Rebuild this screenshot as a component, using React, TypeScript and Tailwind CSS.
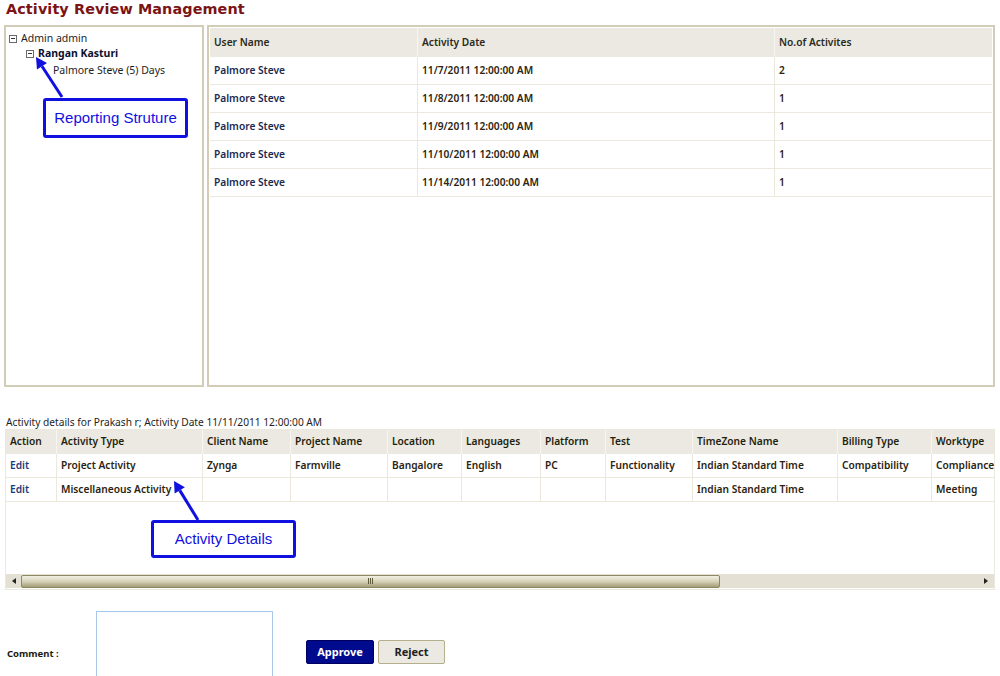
import React from "react";

const font = { fontFamily: '"Noto Sans", "Liberation Sans", sans-serif' };

function TreeToggle() {
  return (
    <span className="inline-flex items-center justify-center w-[8px] h-[8px] border border-[#6b6b6b] bg-white mr-[4px] align-middle">
      <span className="block w-[4px] h-[1px] bg-[#333]" />
    </span>
  );
}

const topRows = [
  ["Palmore Steve", "11/7/2011 12:00:00 AM", "2"],
  ["Palmore Steve", "11/8/2011 12:00:00 AM", "1"],
  ["Palmore Steve", "11/9/2011 12:00:00 AM", "1"],
  ["Palmore Steve", "11/10/2011 12:00:00 AM", "1"],
  ["Palmore Steve", "11/14/2011 12:00:00 AM", "1"],
];

const detailCols: [string, number][] = [
  ["Action", 50],
  ["Activity Type", 146],
  ["Client Name", 88],
  ["Project Name", 97],
  ["Location", 74],
  ["Languages", 79],
  ["Platform", 65],
  ["Test", 87],
  ["TimeZone Name", 145],
  ["Billing Type", 94],
  ["Worktype", 80],
];

const detailRows = [
  ["Edit", "Project Activity", "Zynga", "Farmville", "Bangalore", "English", "PC", "Functionality", "Indian Standard Time", "Compatibility", "Compliance Test"],
  ["Edit", "Miscellaneous Activity", "", "", "", "", "", "", "Indian Standard Time", "", "Meeting"],
];

function Arrow({ x1, y1, x2, y2 }: { x1: number; y1: number; x2: number; y2: number }) {
  const ang = Math.atan2(y2 - y1, x2 - x1);
  const L = 11;
  const W = 6;
  const bx = x2 - L * Math.cos(ang);
  const by = y2 - L * Math.sin(ang);
  const px = -Math.sin(ang) * W;
  const py = Math.cos(ang) * W;
  return (
    <>
      <line x1={x1} y1={y1} x2={bx} y2={by} stroke="#1010e0" strokeWidth={3} />
      <polygon points={`${x2},${y2} ${bx + px},${by + py} ${bx - px},${by - py}`} fill="#1010e0" />
    </>
  );
}

export default function App() {
  return (
    <div className="relative w-[1000px] h-[676px] overflow-hidden bg-white text-[10.2px] text-[#1e1e1e]" style={font}>
      <h1
        className="pl-[6px] h-[22px] leading-[18px] text-[14.4px] font-bold text-[#7b1414] tracking-[0.1px]"
        style={{ fontFamily: '"DejaVu Sans", sans-serif' }}
      >
        Activity Review Management
      </h1>

      <div className="flex gap-[3px] pl-[4px] mt-[3px]">
        <div className="w-[200px] h-[362px] border-2 border-[#d3cdb8] pt-[4px] pl-[3px] text-[10.5px]">
          <div className="flex items-center h-[15px]">
            <TreeToggle />
            <span>Admin admin</span>
          </div>
          <div className="flex items-center h-[15px] pl-[17px]">
            <TreeToggle />
            <span className="font-bold text-[#0c1030]">Rangan Kasturi</span>
          </div>
          <div className="flex items-center h-[19px] pl-[44px]">Palmore Steve (5) Days</div>
        </div>

        <div className="w-[788px] h-[362px] border-2 border-[#d3cdb8] p-[1px]">
          <div className="grid grid-cols-[207px_357px_1fr] font-semibold">
            {["User Name", "Activity Date", "No.of Activites"].map((h, i) => (
              <div key={h} className={`h-[29px] flex items-center pl-[4px] bg-[#ebe9e1] text-[#2a2a1a] ${i > 0 ? "border-l border-[#f7f6f1]" : ""}`}>
                {h}
              </div>
            ))}
            {topRows.map((r, ri) =>
              r.map((c, ci) => (
                <div
                  key={`${ri}-${ci}`}
                  className={`h-[28px] flex items-center pl-[4px] border-b border-[#ece8dc] ${ci > 0 ? "border-l" : ""} ${ci === 0 ? "text-[#1a2a52]" : "text-[#2b2410]"}`}
                >
                  {c}
                </div>
              ))
            )}
          </div>
        </div>
      </div>

      <div className="pl-[6px] mt-[29px] h-[13px] leading-[13px]">
        Activity details for Prakash r; Activity Date 11/11/2011 12:00:00 AM
      </div>

      <div className="ml-[5px] w-[990px] h-[161px] border border-[#ebe8de] flex flex-col overflow-hidden">
        <div className="flex-1 overflow-hidden">
          <div className="w-[1005px] font-semibold">
            <div className="flex bg-[#ebe9e1] h-[24px]">
              {detailCols.map(([h, w], i) => (
                <div key={h} style={{ width: w }} className={`shrink-0 flex items-center pl-[4px] text-[#1f1f10] ${i > 0 ? "border-l border-[#f7f6f1]" : ""}`}>
                  {h}
                </div>
              ))}
            </div>
            {detailRows.map((r, ri) => (
              <div key={ri} className="flex h-[24px] border-b border-[#ece8dc]">
                {r.map((c, ci) => (
                  <div
                    key={ci}
                    style={{ width: detailCols[ci][1] }}
                    className={`shrink-0 flex items-center pl-[4px] whitespace-nowrap overflow-hidden ${ci > 0 ? "border-l border-[#ece8dc]" : ""} ${ci === 0 ? "text-[#1a3a7a]" : "text-[#2b2410]"}`}
                  >
                    {c}
                  </div>
                ))}
              </div>
            ))}
          </div>
        </div>
        <div className="h-[14px] mb-[1px] flex items-center bg-[#e4e1d4] px-[1px]">
          <div className="w-[14px] flex justify-center">
            <span className="block w-0 h-0 border-y-[3px] border-y-transparent border-r-[4px] border-r-[#222]" />
          </div>
          <div className="w-[699px] h-[13px] rounded-[2px] border border-[#8e8862] bg-gradient-to-b from-[#f2f0e4] via-[#d6d2b8] to-[#a29c76] flex items-center justify-center">
            <span className="flex gap-[1px]">
              <span className="block w-[1px] h-[6px] bg-[#5e5a3c]" />
              <span className="block w-[1px] h-[6px] bg-[#5e5a3c]" />
              <span className="block w-[1px] h-[6px] bg-[#5e5a3c]" />
            </span>
          </div>
          <div className="flex-1" />
          <div className="w-[14px] flex justify-center">
            <span className="block w-0 h-0 border-y-[3px] border-y-transparent border-l-[4px] border-l-[#222]" />
          </div>
        </div>
      </div>

      <div className="flex items-start mt-[21px]">
        <div className="w-[96px] pl-[7px] pt-[36px] text-[9.5px] font-bold text-[#1a1a10]">Comment :</div>
        <textarea className="w-[177px] h-[70px] border border-[#a9c8ea] resize-none outline-none" />
        <div className="flex gap-[4px] ml-[33px] mt-[29px]">
          <button className="w-[68px] h-[24px] rounded-[2px] bg-[#000a8c] text-white font-bold text-[11px] border border-[#000060]">
            Approve
          </button>
          <button className="w-[67px] h-[24px] rounded-[2px] bg-[#ebe9e1] text-[#222] font-bold text-[11px] border border-[#b5ae8c]">
            Reject
          </button>
        </div>
      </div>

      {/* Annotations */}
      <svg className="absolute left-0 top-0 pointer-events-none" width={1000} height={676}>
        <Arrow x1={62} y1={97} x2={36} y2={57} />
        <Arrow x1={198} y1={520} x2={174} y2={481} />
      </svg>
      <div
        className="absolute left-[43px] top-[98px] w-[145px] h-[40px] border-[3px] border-[#1010e0] rounded-[3px] bg-white flex items-center justify-center text-[15px] text-[#1010e0]"
        style={{ fontFamily: '"Liberation Sans", Arial, sans-serif' }}
      >
        Reporting Struture
      </div>
      <div
        className="absolute left-[151px] top-[520px] w-[145px] h-[38px] border-[3px] border-[#1010e0] rounded-[3px] bg-white flex items-center justify-center text-[15px] text-[#1010e0]"
        style={{ fontFamily: '"Liberation Sans", Arial, sans-serif' }}
      >
        Activity Details
      </div>
    </div>
  );
}
